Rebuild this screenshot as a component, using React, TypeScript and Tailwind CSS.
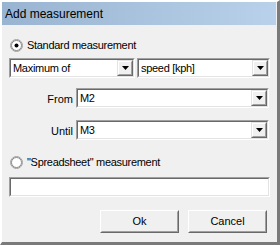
import React from "react";

const sunken =
  "border border-t-[#a0a0a0] border-l-[#a0a0a0] border-b-white border-r-white";
const sunkenInner =
  "border border-t-[#696969] border-l-[#696969] border-b-[#e3e3e3] border-r-[#e3e3e3]";
const raised =
  "border border-t-[#e3e3e3] border-l-[#e3e3e3] border-b-[#696969] border-r-[#696969]";
const raisedInner =
  "border border-t-white border-l-white border-b-[#a0a0a0] border-r-[#a0a0a0]";

function Radio({ checked }: { checked?: boolean }) {
  return (
    <svg width="13" height="13" viewBox="0 0 13 13" className="shrink-0">
      <circle cx="6.5" cy="6.5" r="6" fill="#ffffff" stroke="#a0a0a0" />
      <circle cx="6.5" cy="6.5" r="5" fill="#ffffff" stroke="#696969" strokeWidth="0.8" />
      {checked && <circle cx="6.5" cy="6.5" r="2" fill="#000000" />}
    </svg>
  );
}

function Combo({ value, className }: { value: string; className: string }) {
  return (
    <div className={`${sunken} h-[20px] ${className}`}>
      <div className={`${sunkenInner} h-full bg-white flex items-center`}>
        <span className="flex-1 pl-[2px] leading-none tracking-[-0.3px]">{value}</span>
        <div className={`${raised} w-[16px] h-full bg-[#f0f0f0]`}>
          <div className={`${raisedInner} h-full flex items-center justify-center`}>
            <svg width="7" height="4" viewBox="0 0 7 4">
              <path d="M0 0h7L3.5 4z" fill="#000000" />
            </svg>
          </div>
        </div>
      </div>
    </div>
  );
}

function Button({ label }: { label: string }) {
  return (
    <div className="border border-t-white border-l-white border-b-[#696969] border-r-[#696969] w-[79px] h-[23px] bg-[#f0f0f0]">
      <div className="border border-t-[#f0f0f0] border-l-[#f0f0f0] border-b-[#a0a0a0] border-r-[#a0a0a0] h-full flex items-center justify-center leading-none">
        {label}
      </div>
    </div>
  );
}

export default function App() {
  return (
    <div
      className="w-[280px] h-[245px] bg-[#f0f0f0] text-black text-[11px] border-t-2 border-l-2 border-t-white border-l-white border-r-[3px] border-b-[3px] border-r-[#7a7a7a] border-b-[#7a7a7a] flex flex-col"
      style={{ fontFamily: '"Liberation Sans", Arial, sans-serif' }}
    >
      {/* Title bar */}
      <div className="h-[23px] mr-[1px] bg-gradient-to-r from-[#99b4d1] to-[#b9d1ea] flex items-center pl-[3px] text-[12px]">
        Add measurement
      </div>

      <div className="flex flex-col px-[7px]">
        <div className="flex items-center gap-[4px] h-[14px] mt-[13px] pl-[1px]">
          <Radio checked />
          <span className="tracking-[-0.3px]">Standard measurement</span>
        </div>

        <div className="flex gap-[2px] mt-[6px]">
          <Combo value="Maximum of" className="w-[126px]" />
          <Combo value="speed [kph]" className="w-[133px]" />
        </div>

        <div className="flex items-center mt-[10px]">
          <span className="w-[65px] text-right pr-[1px] pt-[3px]">From</span>
          <Combo value="M2" className="w-[193px] ml-[2px]" />
        </div>

        <div className="flex items-center mt-[12px]">
          <span className="w-[65px] text-right pr-[1px] pt-[3px]">Until</span>
          <Combo value="M3" className="w-[193px] ml-[2px]" />
        </div>

        <div className="flex items-center gap-[4px] h-[14px] mt-[15px] pl-[1px]">
          <Radio />
          <span className="tracking-[-0.3px]">"Spreadsheet" measurement</span>
        </div>

        <div className={`${sunken} h-[20px] w-[261px] mt-[8px]`}>
          <div className={`${sunkenInner} h-full bg-white`} />
        </div>

        <div className="flex justify-end gap-[9px] mt-[13px] pr-[3px]">
          <Button label="Ok" />
          <Button label="Cancel" />
        </div>
      </div>
    </div>
  );
}
